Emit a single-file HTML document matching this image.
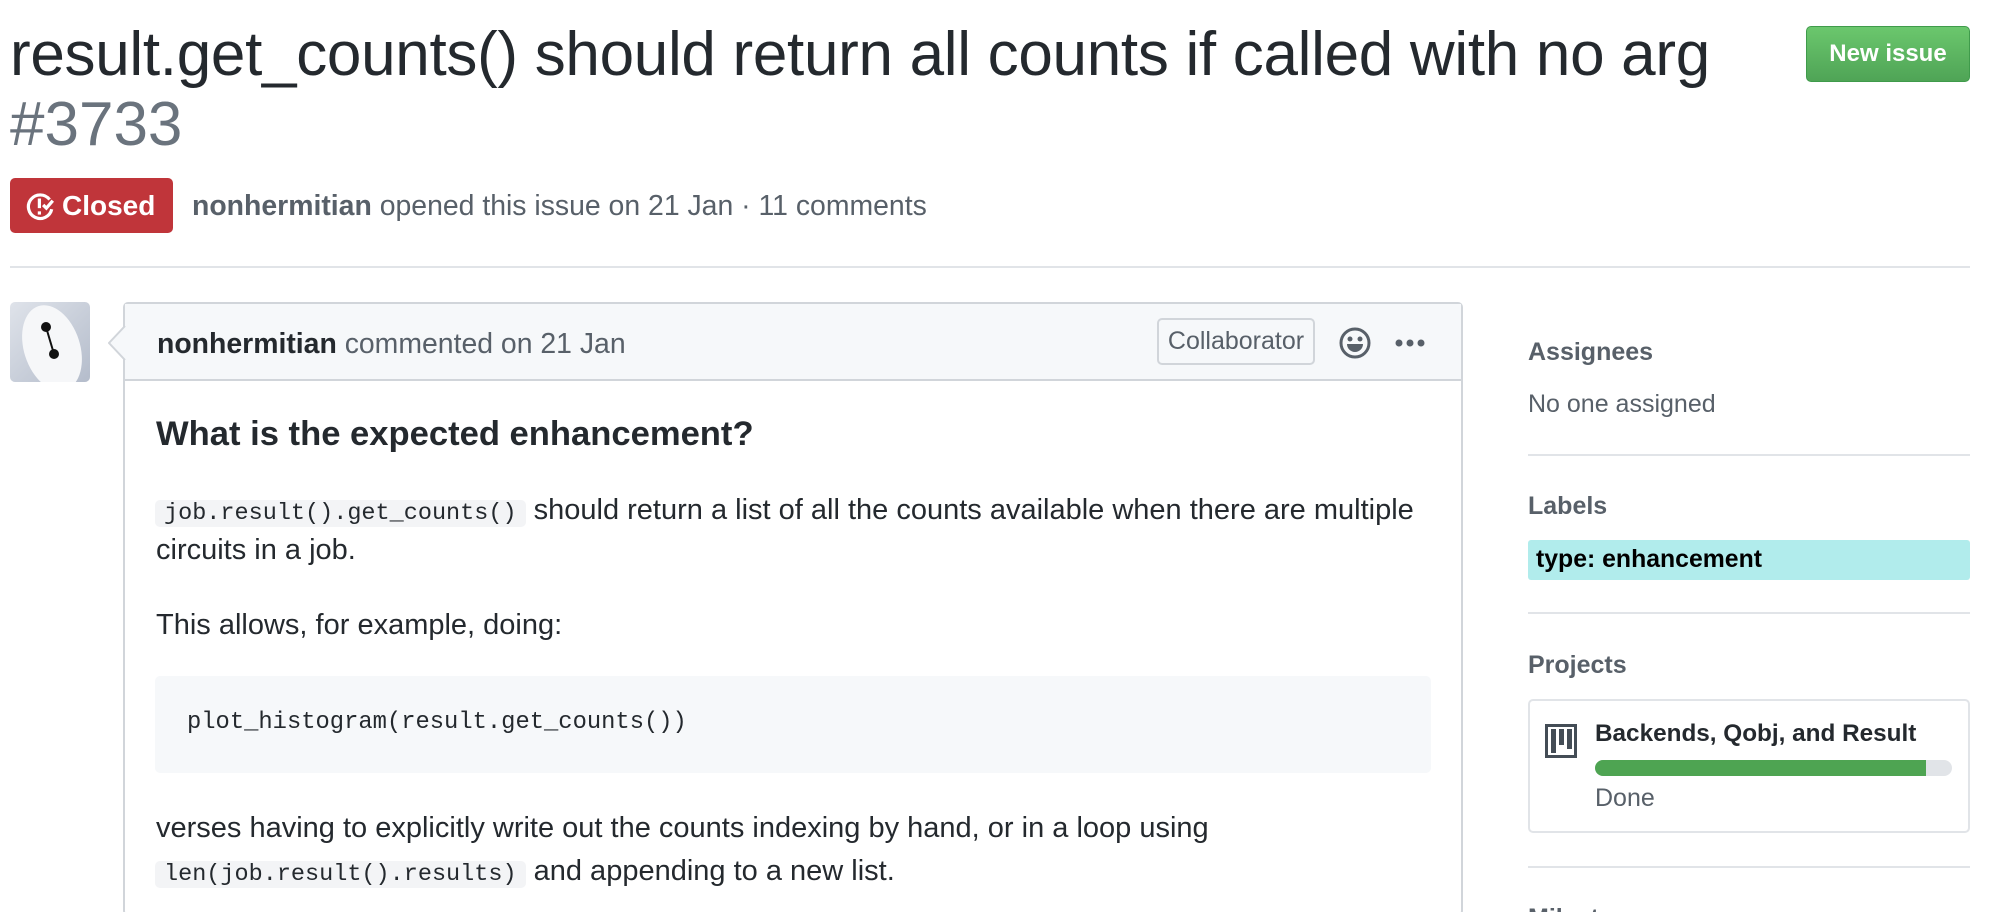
<!DOCTYPE html>
<html><head><meta charset="utf-8"><style>
*{margin:0;padding:0;box-sizing:border-box}
html,body{width:2004px;height:912px;overflow:hidden}
body{background:#fff;font-family:"Liberation Sans",Arial,sans-serif;color:#24292e;position:relative}
.a{position:absolute;white-space:nowrap}
.code{font-family:"Liberation Mono",monospace;font-size:23.5px;background:#f3f4f6;border-radius:5px;padding:0 9px}
</style></head><body>

<div class="a" style="left:10px;top:20px;font-size:62px;line-height:70px;color:#24292e;letter-spacing:-0.3px">result.get_counts() should return all counts if called with no arg</div>
<div class="a" style="left:10px;top:90px;font-size:62px;line-height:70px;color:#6a737d">#3733</div>

<div class="a" style="left:1806px;top:26px;width:164px;height:56px;border-radius:5px;border:1px solid #3f9b4b;background:linear-gradient(#6bc76d,#4fa456);color:#fff;font-weight:bold;font-size:24px;line-height:54px;text-align:center">New issue</div>

<div class="a" style="left:10px;top:178px;width:163px;height:55px;border-radius:5px;background:#c0353a;color:#fff;font-weight:bold;font-size:28px;line-height:55px;padding-left:16px">
<svg width="30" height="30" viewBox="0 0 28 28" style="position:absolute;left:16px;top:13px"><path d="M22 8 A11 11 0 1 0 24 17" fill="none" stroke="#fff" stroke-width="3"/><rect x="11" y="7" width="3" height="9" fill="#fff"/><rect x="11" y="19" width="3" height="3" fill="#fff"/><path d="M16 13 l3 3 l6 -7" fill="none" stroke="#fff" stroke-width="3"/></svg>
<span style="margin-left:36px">Closed</span></div>
<div class="a" style="left:192px;top:190px;font-size:28.4px;line-height:32px;color:#586069"><b style="color:#586069">nonhermitian</b> opened this issue on 21 Jan · 11 comments</div>

<div class="a" style="left:10px;top:266px;width:1960px;height:2px;background:#e1e4e8"></div>

<div class="a" style="left:10px;top:302px;width:80px;height:80px;border-radius:5px;overflow:hidden;background:linear-gradient(135deg,#dfe3ea,#b4bccb)">
<svg width="80" height="80" viewBox="0 0 80 80"><ellipse cx="42" cy="46" rx="28" ry="44" fill="#f6f7f9" transform="rotate(-18 42 46)"/><line x1="36" y1="25" x2="44" y2="52" stroke="#111" stroke-width="2"/><circle cx="36" cy="25" r="5" fill="#111"/><circle cx="44" cy="52" r="5" fill="#111"/></svg></div>

<div class="a" style="left:123px;top:302px;width:1340px;height:614px;border:2px solid #d1d5da;border-radius:5px"></div>
<div class="a" style="left:125px;top:304px;width:1336px;height:77px;background:#f6f8fa;border-bottom:2px solid #d1d5da"></div>
<svg class="a" style="left:108px;top:326px" width="18" height="34" viewBox="0 0 18 34"><path d="M17 0 L1 17 L17 34" fill="#f6f8fa" stroke="#d1d5da" stroke-width="2"/></svg>
<div class="a" style="left:157px;top:328px;font-size:28.4px;line-height:32px;color:#586069"><b style="color:#24292e">nonhermitian</b> commented on 21 Jan</div>
<div class="a" style="left:1157px;top:318px;width:158px;height:47px;border:2px solid #d1d5da;border-radius:5px;font-size:25px;line-height:43px;text-align:center;color:#586069">Collaborator</div>
<svg class="a" style="left:1339px;top:327px" width="32" height="32" viewBox="0 0 32 32"><circle cx="16" cy="16" r="14" fill="none" stroke="#586069" stroke-width="3"/><circle cx="11" cy="12" r="2.5" fill="#586069"/><circle cx="21" cy="12" r="2.5" fill="#586069"/><path d="M8 17 H24 A8 8 0 0 1 8 17 Z" fill="#586069"/></svg>
<svg class="a" style="left:1395px;top:338px" width="30" height="10" viewBox="0 0 30 10"><circle cx="4" cy="5" r="3.5" fill="#586069"/><circle cx="15" cy="5" r="3.5" fill="#586069"/><circle cx="26" cy="5" r="3.5" fill="#586069"/></svg>

<div class="a" style="left:156px;top:414px;font-size:34.6px;font-weight:bold;line-height:40px">What is the expected enhancement?</div>
<div class="a" style="left:155px;top:490px;font-size:29px;line-height:40px"><span class="code">job.result().get_counts()</span> should return a list of all the counts available when there are multiple</div>
<div class="a" style="left:156px;top:530px;font-size:29px;line-height:40px">circuits in a job.</div>
<div class="a" style="left:156px;top:605px;font-size:29px;line-height:40px">This allows, for example, doing:</div>
<div class="a" style="left:155px;top:676px;width:1276px;height:97px;background:#f6f8fa;border-radius:5px"></div>
<div class="a" style="left:187px;top:708px;font-family:'Liberation Mono',monospace;font-size:23.8px;line-height:30px">plot_histogram(result.get_counts())</div>
<div class="a" style="left:156px;top:808px;font-size:29px;line-height:40px">verses having to explicitly write out the counts indexing by hand, or in a loop using</div>
<div class="a" style="left:155px;top:851px;font-size:29px;line-height:40px"><span class="code">len(job.result().results)</span> and appending to a new list.</div>

<div class="a" style="left:1528px;top:338px;font-size:25px;font-weight:bold;color:#586069;line-height:28px">Assignees</div>
<div class="a" style="left:1528px;top:390px;font-size:25px;color:#586069;line-height:28px">No one assigned</div>
<div class="a" style="left:1528px;top:454px;width:442px;height:2px;background:#e1e4e8"></div>
<div class="a" style="left:1528px;top:492px;font-size:25px;font-weight:bold;color:#586069;line-height:28px">Labels</div>
<div class="a" style="left:1528px;top:540px;width:442px;height:40px;background:#b1ecec;border-radius:3px;font-size:24.8px;font-weight:bold;color:#000;line-height:40px;padding-left:8px">type: enhancement</div>
<div class="a" style="left:1528px;top:612px;width:442px;height:2px;background:#e1e4e8"></div>
<div class="a" style="left:1528px;top:651px;font-size:25px;font-weight:bold;color:#586069;line-height:28px">Projects</div>
<div class="a" style="left:1528px;top:699px;width:442px;height:134px;border:2px solid #e1e4e8;border-radius:5px"></div>
<svg class="a" style="left:1545px;top:724px" width="32" height="34" viewBox="0 0 32 34"><rect x="1.5" y="1.5" width="29" height="31" fill="none" stroke="#444d56" stroke-width="3"/><rect x="6" y="5" width="5" height="24" fill="#444d56"/><rect x="14" y="5" width="5" height="16" fill="#444d56"/><rect x="22" y="5" width="5" height="20" fill="#444d56"/></svg>
<div class="a" style="left:1595px;top:720px;font-size:24.3px;font-weight:bold;line-height:28px">Backends, Qobj, and Result</div>
<div class="a" style="left:1595px;top:760px;width:357px;height:16px;background:#e1e4e8;border-radius:8px;overflow:hidden"><div style="width:331px;height:16px;background:#4ea452"></div></div>
<div class="a" style="left:1595px;top:784px;font-size:25px;color:#586069;line-height:28px">Done</div>
<div class="a" style="left:1528px;top:866px;width:442px;height:2px;background:#e1e4e8"></div>
<div class="a" style="left:1528px;top:904px;height:8px;overflow:hidden"><div style="font-size:25px;font-weight:bold;color:#586069;line-height:28px">Milestone</div></div>
</body></html>
